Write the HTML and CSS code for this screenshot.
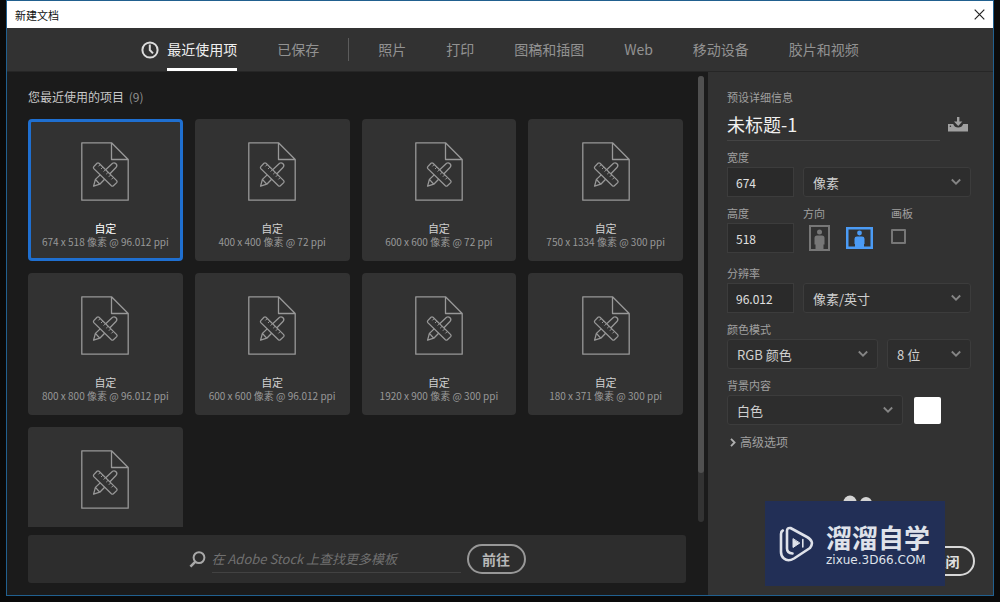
FILE: index.html
```
<!DOCTYPE html>
<html lang="zh-CN">
<head>
    <meta charset="UTF-8">
    <meta name="viewport" content="width=device-width, initial-scale=1.0">
    <title>新建文档</title>
    <link rel="stylesheet" href="styles.css">
</head>
<body>
    <svg class="sprite" aria-hidden="true">
        <symbol id="icon-doc" viewBox="0 0 48 59">
            <g fill="none" stroke="currentColor" stroke-width="1.3" stroke-linejoin="round">
                <path d="M.8.8H30.5L47.2 17.5V58.2H.8Z M30.5.8V17.5H47.2"/>
                <path d="M12.6 44.2 14.4 37.4 31.6 21.2Q33.4 20.2 35 21.8T35.2 25.2L18.8 42.2Z M14.4 37.4 18.8 42.2"/>
                <path fill="#323232" d="M12.8 24.6 16 21.2Q17 20.4 18 21.2L35.7 38.6Q36.5 39.6 35.7 40.6L32.4 43.8Q31.4 44.6 30.4 43.8L12.8 26.6Q12 25.6 12.8 24.6Z"/>
                <path stroke-width="1" d="M19.2 22.6 17.4 24.4M21.8 25.2 20 27M24.4 27.8 22.6 29.6M27 30.4 25.2 32.2M29.6 33 27.8 34.8M32.2 35.6 30.4 37.4"/>
            </g>
        </symbol>
        <symbol id="icon-chevron" viewBox="0 0 12 8">
            <path d="M1.8 1.5 6 5.7 10.2 1.5" fill="none" stroke="currentColor" stroke-width="1.8"/>
        </symbol>
    </svg>

    <div class="window">
        <header class="titlebar">
            <h1>新建文档</h1>
            <button class="close" aria-label="关闭窗口">
                <svg width="11" height="11" viewBox="0 0 11 11"><path d="M.7.7 10.3 10.3M10.3.7.7 10.3" stroke="#222" stroke-width="1.2"/></svg>
            </button>
        </header>

        <nav class="tabs">
            <a class="tab active" href="#recent">
                <svg class="clock" width="18" height="18" viewBox="0 0 18 18" fill="none" stroke="#dcdcdc" stroke-width="2"><circle cx="9" cy="9" r="7.6"/><path d="M8.8 3.5V9L12 12.4"/></svg>
                <span>最近使用项</span>
            </a>
            <a class="tab" href="#saved">已保存</a>
            <span class="divider"></span>
            <a class="tab" href="#photo">照片</a>
            <a class="tab" href="#print">打印</a>
            <a class="tab" href="#art">图稿和插图</a>
            <a class="tab" href="#web">Web</a>
            <a class="tab" href="#mobile">移动设备</a>
            <a class="tab" href="#film">胶片和视频</a>
        </nav>

        <div class="content">
            <main class="recent">
                <h2>您最近使用的项目 <span>(9)</span></h2>
                <div class="scroll-area">
                    <div class="cards">
                        <button class="card selected"><svg><use href="#icon-doc"/></svg><b>自定</b><span>674 x 518 像素 @ 96.012 ppi</span></button>
                        <button class="card"><svg><use href="#icon-doc"/></svg><b>自定</b><span>400 x 400 像素 @ 72 ppi</span></button>
                        <button class="card"><svg><use href="#icon-doc"/></svg><b>自定</b><span>600 x 600 像素 @ 72 ppi</span></button>
                        <button class="card"><svg><use href="#icon-doc"/></svg><b>自定</b><span>750 x 1334 像素 @ 300 ppi</span></button>
                        <button class="card"><svg><use href="#icon-doc"/></svg><b>自定</b><span>800 x 800 像素 @ 96.012 ppi</span></button>
                        <button class="card"><svg><use href="#icon-doc"/></svg><b>自定</b><span>600 x 600 像素 @ 96.012 ppi</span></button>
                        <button class="card"><svg><use href="#icon-doc"/></svg><b>自定</b><span>1920 x 900 像素 @ 300 ppi</span></button>
                        <button class="card"><svg><use href="#icon-doc"/></svg><b>自定</b><span>180 x 371 像素 @ 300 ppi</span></button>
                        <button class="card" aria-label="自定"><svg><use href="#icon-doc"/></svg></button>
                    </div>
                </div>
                <form class="search">
                    <svg width="17" height="17" viewBox="0 0 17 17" fill="none" stroke="#a8a8a8"><circle cx="10" cy="6.6" r="5.4" stroke-width="2"/><path d="M6.4 10.6 1.4 15.6" stroke-width="2.6"/></svg>
                    <input type="text" aria-label="查找模板" placeholder="在 Adobe Stock 上查找更多模板">
                    <button type="button" class="pill">前往</button>
                </form>
            </main>

            <div class="scrollbar"><div class="thumb"></div></div>

            <aside class="details">
                <h2>预设详细信息</h2>
                <div class="name-row">
                    <input type="text" aria-label="文档名称" value="未标题-1">
                    <button class="icon-btn" aria-label="存储预设">
                        <svg width="20" height="15" viewBox="0 0 20 15" fill="#a0a0a0"><path d="M9 0H11.4V4.6H14.4L10.2 9 6 4.6H9Z"/><path d="M0 7H5.2Q6.4 10.6 10.2 10.6T15.2 7H20V14.6H0Z"/><circle cx="2.4" cy="9.3" r=".8" fill="#323232"/></svg>
                    </button>
                </div>

                <div class="row">
                    <div class="field small">
                        <label for="width">宽度</label>
                        <input id="width" type="text" value="674">
                    </div>
                    <div class="select">
                        <select aria-label="单位"><option>像素</option></select>
                        <svg><use href="#icon-chevron"/></svg>
                    </div>
                </div>

                <div class="row tall">
                    <div class="field small">
                        <label for="height">高度</label>
                        <input id="height" type="text" value="518">
                    </div>
                    <div class="field orientation">
                        <span class="label">方向</span>
                        <div class="toggles">
                            <button class="icon-btn" aria-label="纵向">
                                <svg width="21" height="26" viewBox="0 0 21 26" fill="#777"><path fill-rule="evenodd" d="M0 0H21V26H0ZM2 2V24H19V2Z"/><circle cx="10.5" cy="7" r="2.5"/><path d="M5.5 13Q5.5 10.5 8 10.5H13Q15.5 10.5 15.5 13V19.5H14.5V24H6.5V19.5H5.5Z"/></svg>
                            </button>
                            <button class="icon-btn" aria-label="横向">
                                <svg width="27" height="22" viewBox="0 0 27 22" fill="#4b9bf5"><path fill-rule="evenodd" d="M0 0H27V22H0ZM2.5 2.5V19.5H24.5V2.5Z"/><circle cx="13.5" cy="6" r="2.4"/><path d="M8.5 11.8Q8.5 9.5 11 9.5H16Q18.5 9.5 18.5 11.8V17H18V20H9V17H8.5Z"/></svg>
                            </button>
                        </div>
                    </div>
                    <div class="field">
                        <label for="artboard">画板</label>
                        <input id="artboard" type="checkbox">
                    </div>
                </div>

                <div class="row">
                    <div class="field small">
                        <label for="resolution">分辨率</label>
                        <input id="resolution" type="text" value="96.012">
                    </div>
                    <div class="select">
                        <select aria-label="分辨率单位"><option>像素/英寸</option></select>
                        <svg><use href="#icon-chevron"/></svg>
                    </div>
                </div>

                <div class="row">
                    <div class="field grow">
                        <label for="mode">颜色模式</label>
                        <div class="select">
                            <select id="mode"><option>RGB 颜色</option></select>
                            <svg><use href="#icon-chevron"/></svg>
                        </div>
                    </div>
                    <div class="select depth">
                        <select aria-label="位深度"><option>8 位</option></select>
                        <svg><use href="#icon-chevron"/></svg>
                    </div>
                </div>

                <div class="row background">
                    <div class="field grow">
                        <label for="background">背景内容</label>
                        <div class="select">
                            <select id="background"><option>白色</option></select>
                            <svg><use href="#icon-chevron"/></svg>
                        </div>
                    </div>
                    <button class="swatch" aria-label="背景颜色"></button>
                </div>

                <button class="advanced">
                    <svg width="6" height="9" viewBox="0 0 6 9"><path d="M1 .8 4.6 4.5 1 8.2" fill="none" stroke="#b0b0b0" stroke-width="1.8"/></svg>
                    高级选项
                </button>

                <div class="actions">
                    <button class="pill light">关闭</button>
                </div>
            </aside>
        </div>

        <svg class="spinner" width="30" height="14" viewBox="0 0 30 14" fill="#d4d4d4"><circle cx="7" cy="7" r="6.5"/><circle cx="23" cy="8" r="6"/></svg>
        <div class="watermark">
            <svg width="35" height="36" viewBox="0 0 35 36" fill="none" stroke="#dfe2ea" stroke-width="2.6" stroke-linejoin="round" stroke-linecap="round">
                <path d="M13.5 27.5Q8 27 8 22.5V5Q8 1.5 11.5 2L28 11Q36 15.5 31 22L15 32.5Q9 36 5 32.5 2 30.5 2 26V8Q2 5.5 3.8 4.5"/>
                <path d="M14 13V21.5L20.5 17.2Z" fill="#dfe2ea" stroke-width="1"/>
                <path d="M23.8 13.5V21" stroke-width="1.6"/>
            </svg>
            <div>
                <strong>溜溜自学</strong>
                <small>zixue.3D66.COM</small>
            </div>
        </div>
    </div>
</body>
</html>
```
FILE: styles.css
```
* {
    box-sizing: border-box;
}
body {
    margin: 0;
    padding: 0 6px 6px;
    height: 100vh;
    background: #0a0a0a;
    color: #c8c8c8;
    font-family: "Noto Sans CJK SC", "Noto Sans", sans-serif;
    font-size: 12px;
}
button, input, select {
    font: inherit;
    color: inherit;
    margin: 0;
}
button {
    padding: 0;
    border: none;
    background: none;
    cursor: pointer;
}
h1, h2 {
    margin: 0;
    font-weight: normal;
}
svg {
    display: block;
    flex: none;
}
.sprite {
    position: absolute;
    width: 0;
    height: 0;
}
.window {
    position: relative;
    display: flex;
    flex-direction: column;
    height: 100%;
    border: 1px solid #21608f;
    background: #323232;
}
.titlebar {
    display: flex;
    flex: none;
    justify-content: space-between;
    align-items: center;
    height: 27px;
    padding: 0 8px;
    background: #fff;
    color: #111;
}
.titlebar h1 {
    font-size: 11px;
}

/* category tabs */
.tabs {
    display: flex;
    flex: none;
    justify-content: center;
    gap: 40px;
    height: 44px;
    border-bottom: 1px solid #262626;
    font-size: 14px;
    line-height: 20px;
}
.tab {
    display: flex;
    align-items: center;
    gap: 8px;
    padding-bottom: 1px;
    color: #929292;
    text-decoration: none;
}
.tab.active {
    padding-bottom: 0;
    color: #f0f0f0;
}
.tab.active span {
    display: flex;
    align-items: center;
    height: 100%;
    padding-top: 2px;
    border-bottom: 3px solid #fff;
}
.divider {
    width: 1px;
    height: 23px;
    margin: 0 -11px;
    align-self: center;
    background: #5c5c5c;
}

.content {
    display: flex;
    flex: 1;
    min-height: 0;
    background: #1b1b1b;
}
.recent {
    display: flex;
    flex: 1;
    flex-direction: column;
    min-width: 0;
    padding: 15px 12px 12px 21px;
}
.recent h2 {
    height: 32px;
    font-size: 12px;
    line-height: 20px;
}
.recent h2 span {
    margin-left: 2px;
    color: #909090;
}
.scroll-area {
    flex: 1;
    min-height: 0;
    overflow: hidden;
}
.cards {
    display: grid;
    grid-template-columns: repeat(4, 1fr);
    grid-auto-rows: 142px;
    gap: 12px;
    margin-right: 3px;
}
.card {
    display: flex;
    flex-direction: column;
    align-items: center;
    padding-top: 20px;
    border: 3px solid #323232;
    border-radius: 4px;
    background: #323232;
    color: #989898;
    font-size: 10px;
    line-height: 14px;
    white-space: nowrap;
}
.card.selected {
    border-color: #1f6fd0;
}
.card svg {
    width: 48px;
    height: 59px;
    margin-bottom: 20px;
}
.card b {
    color: #d0d0d0;
    font-size: 11px;
    font-weight: normal;
}
.card.selected b {
    color: #fff;
}
.search {
    display: flex;
    flex: none;
    justify-content: center;
    align-items: center;
    gap: 6px;
    height: 48px;
    margin-top: 8px;
    border-radius: 3px;
    background: #2d2d2d;
}
.search input {
    width: 249px;
    height: 28px;
    padding: 0;
    border: none;
    border-bottom: 1px solid #424242;
    background: none;
    font-size: 13px;
    font-style: italic;
}
.search input::placeholder {
    color: #707070;
}
.pill {
    width: 59px;
    height: 30px;
    border: 2px solid #989898;
    border-radius: 15px;
    color: #b8b8b8;
    font-size: 14px;
    font-weight: bold;
    line-height: 20px;
}
.pill.light {
    border-color: #d8d8d8;
    color: #e0e0e0;
}

.scrollbar {
    width: 6px;
    margin: 4px 4px 73px 0;
    border-radius: 3px;
    background: #333;
}
.thumb {
    height: 89%;
    border-radius: 3px;
    background: #505050;
}

/* preset details */
.details {
    display: flex;
    flex: 0 0 285px;
    flex-direction: column;
    padding: 15px 22px 19px 19px;
    background: #323232;
}
.details h2, .field label, .label {
    color: #a0a0a0;
    font-size: 11px;
    line-height: 20px;
}
.name-row {
    display: flex;
    justify-content: space-between;
    align-items: center;
    height: 34px;
    margin-bottom: 6px;
    padding-right: 3px;
}
.name-row input {
    width: 213px;
    height: 34px;
    padding: 0;
    border: none;
    border-bottom: 1px solid #444;
    background: none;
    color: #f0f0f0;
    font-size: 18px;
}
.row {
    display: flex;
    align-items: flex-end;
    gap: 9px;
    margin-bottom: 6px;
}
.row.tall {
    align-items: flex-start;
    margin-bottom: 10px;
}
.field {
    display: flex;
    flex-direction: column;
}
.field.grow {
    flex: 1;
}
.field.small {
    width: 67px;
}
.field input[type="text"] {
    width: 100%;
    height: 30px;
    padding: 0 8px;
    border: 1px solid #3c3c3c;
    background: #2a2a2a;
    color: #e0e0e0;
    font-size: 12px;
}
.field.orientation {
    width: 79px;
}
.toggles {
    display: flex;
    align-items: center;
    gap: 16px;
    height: 30px;
    padding-left: 6px;
}
.field input[type="checkbox"] {
    width: 15px;
    height: 15px;
    margin-top: 6px;
    appearance: none;
    border: 2px solid #777;
    border-radius: 1px;
}
.select {
    display: grid;
    flex: 1;
    align-items: center;
}
.select.depth {
    flex: 0 0 84px;
}
.select select, .select svg {
    grid-area: 1 / 1;
}
.select select {
    width: 100%;
    height: 30px;
    padding: 0 9px;
    appearance: none;
    border: 1px solid #3c3c3c;
    border-radius: 3px;
    background: #2d2d2d;
    color: #d0d0d0;
    font-size: 13px;
}
.select svg {
    width: 12px;
    height: 8px;
    margin-right: 9px;
    justify-self: end;
    color: #858585;
    pointer-events: none;
}
.background {
    gap: 11px;
    padding-right: 30px;
}
.swatch {
    width: 27px;
    height: 27px;
    margin-bottom: 1px;
    border-radius: 2px;
    background: #fff;
}
.advanced {
    display: flex;
    align-items: center;
    align-self: flex-start;
    gap: 4px;
    margin-top: 1px;
    padding-left: 3px;
    color: #a0a0a0;
    line-height: 20px;
}
.actions {
    display: flex;
    justify-content: flex-end;
    margin: auto -4px 0 0;
}

/* overlays */
.spinner {
    position: absolute;
    right: 120px;
    bottom: 86px;
}
.watermark {
    position: absolute;
    right: 48px;
    bottom: 9px;
    display: flex;
    align-items: center;
    gap: 12px;
    width: 180px;
    height: 85px;
    padding-left: 14px;
    background: #222f56;
    color: #dfe2ea;
}
.watermark strong, .watermark small {
    display: block;
}
.watermark strong {
    font-size: 26px;
    line-height: 32px;
}
.watermark small {
    font-family: "DejaVu Sans", sans-serif;
    font-size: 12px;
    line-height: 14px;
}
```
